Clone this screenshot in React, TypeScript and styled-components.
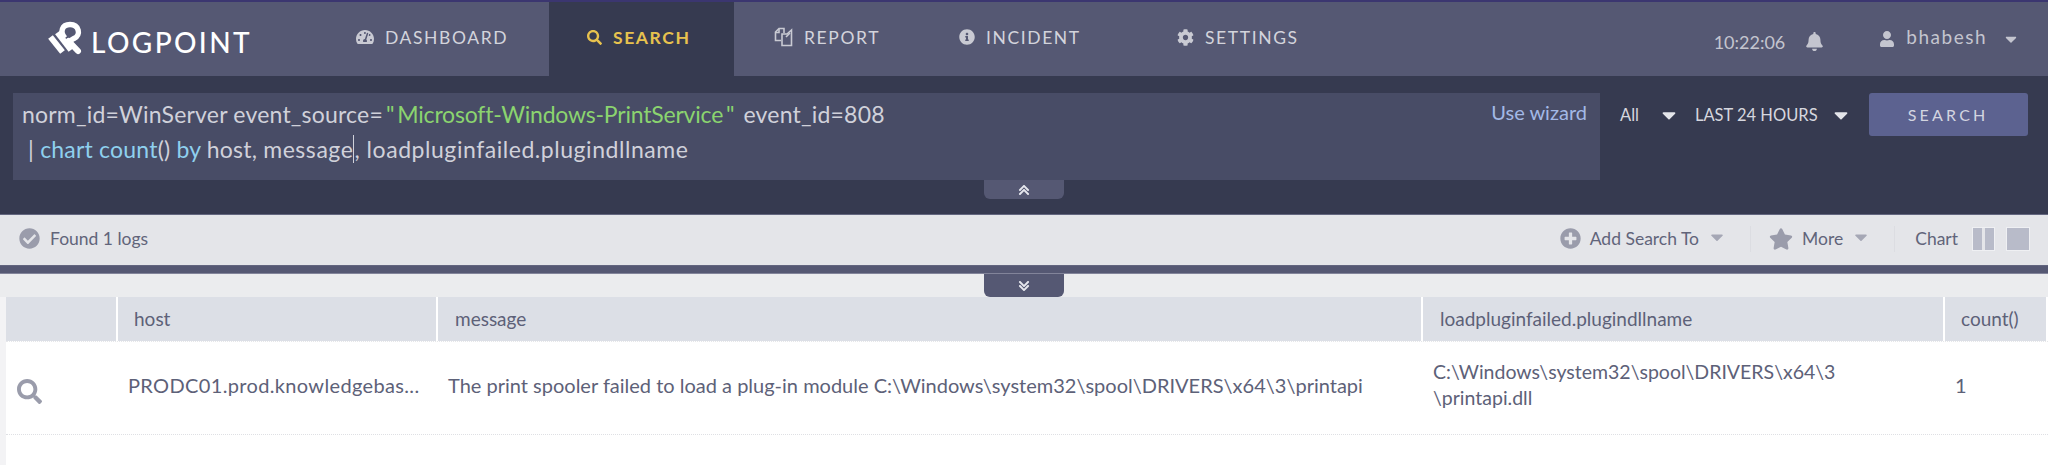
import React from "react";
import styled, { createGlobalStyle } from "styled-components";
import {
  FaBell, FaCaretDown, FaCheckCircle, FaChevronUp, FaChevronDown, FaCog, FaInfoCircle,
  FaPlusCircle, FaSearch, FaStar, FaTachometerAlt, FaUser,
} from "react-icons/fa";

const Global = createGlobalStyle`
  html, body { margin: 0; padding: 0; background: #fff; }
  body { font-family: Lato, "Open Sans", sans-serif; }
  * { box-sizing: border-box; }
`;
const Page = styled.div`width: 2048px; height: 465px; overflow: hidden; background: #fff; display: flex; flex-direction: column;`;
const Dark = styled.div`height: 214px; flex: none; background: #363a50; border-top: 2px solid #3b3670; display: flex; flex-direction: column;`;
const Nav = styled.nav`height: 74px; flex: none; display: flex; background: #555873;`;
const Brand = styled.div`width: 356px; flex: none; padding-left: 44px; display: flex; align-items: center; color: #fff;`;
const BrandName = styled.span`font-size: 28px; letter-spacing: 2.4px; font-weight: 500; margin: 6px 0 0 -3px;`;
const Item = styled.a<{ $active?: boolean; $w: number; $pad: number }>`
  width: ${p => p.$w}px; flex: none; display: flex; align-items: center; gap: 11px; padding: 0 0 4px ${p => p.$pad}px; font-size: 17.5px; letter-spacing: 1.6px;
  color: ${p => p.$active ? "#e8c24e" : "#d3d4dc"};
  background: ${p => p.$active ? "#363a50" : "transparent"};
  font-weight: ${p => p.$active ? 700 : 400};
  svg { flex: none; color: ${p => p.$active ? "#e8c24e" : "#c9cad3"}; }
`;
const NavRight = styled.div`flex: 1; display: flex; align-items: center; justify-content: flex-end; color: #c4c5cf; padding-right: 28px;`;
const Clock = styled.span`font-size: 18px; padding-top: 5px; margin-right: 20px;`;
const User = styled.span`font-size: 19px; letter-spacing: 1.5px; margin: 0 15px 0 11px; padding-bottom: 5px;`;
const SearchRow = styled.div`display: flex; padding: 17px 0 0 13px; height: 106px; align-items: flex-start; position: relative;`;
const Editor = styled.div`width: 1587px; height: 87px; flex: none; background: #484c66; color: #d0d1da; font-size: 23px; letter-spacing: .2px; line-height: 35px; padding: 4px 9px; position: relative; white-space: pre;`;
const EditorLine = styled.div`height: 35px;`;
const Str = styled.span`color: #8bd46f; letter-spacing: -.2px;`;
const Quote = styled.span`margin: 0 3px;`;
const Key = styled.span`color: #8fd0ee;`;
const Fields = styled.span`letter-spacing: .55px;`;
const Pipe = styled.span`border-right: 1px solid #d0d1da;`;
const Wizard = styled.a`position: absolute; top: 2px; right: 13px; color: #a3b9e6; font-size: 20px; letter-spacing: 0;`;
const Scope = styled.div`display: flex; align-items: center; height: 43px; color: #d6d7df; font-size: 16.5px; white-space: nowrap; flex: none;`;
const Caret = styled(FaCaretDown)<{ $c?: string }>`color: ${p => p.$c || "#e4e5ea"}; flex: none;`;
const SearchBtn = styled.button`width: 159px; height: 43px; border: 0; border-radius: 3px; background: #5c6290; color: #d3d5e0; font: 400 16px Lato, sans-serif; letter-spacing: 3.2px; margin-left: 17px; padding: 0;`;
const Grip = styled.div<{ $down?: boolean }>`
  position: absolute; left: 984px; width: 80px; background: #555873; color: #e6e7ee; display: flex; align-items: center; justify-content: center; flex-direction: column;
  ${p => p.$down ? "top: 0; height: 23px;" : "top: 104px; height: 19px;"}
  border-radius: 0 0 6px 6px;
  svg { margin: -4px 0; }
`;
const Tools = styled.div`height: 51px; flex: none; background: #e4e5e9; border-top: 1px solid #63667f; display: flex; align-items: center; padding: 0 19px 3px; color: #61647a; font-size: 17.5px;`;
const Found = styled.span`margin-left: 10px; flex: 1;`;
const ToolText = styled.span<{ $m?: number }>`margin-left: ${p => p.$m ?? 9}px;`;
const Divider = styled.span`width: 1px; height: 26px; background: #dcdde2;`;
const Band = styled.div`height: 9px; flex: none; background: #555873; border-bottom: 1px solid #82849a; border-top: 1px solid #62657f;`;
const Content = styled.div`position: relative; flex: 1; display: flex; flex-direction: column;`;
const TopStrip = styled.div`height: 23px; flex: none; background: #ebecee;`;
const Table = styled.div`flex: 1; background: #fff; border-left: 6px solid #f3f3f5;`;
const Head = styled.div`height: 44px; display: grid; grid-template-columns: 112px 320px 985px 522px 103px; background: #dcdfe6; color: #5d6178; font-size: 19px;`;
const HeadCell = styled.div<{ $pad: number }>`display: flex; align-items: center; padding-left: ${p => p.$pad}px; border-right: 2px solid #fff; padding-bottom: 2px;`;
const Row = styled.div`height: 94px; display: grid; grid-template-columns: 112px 320px 985px 522px 103px; border-top: 1px dotted #e6e7ea; border-bottom: 1px dotted #dfe0e4; color: #5d6178; font-size: 20px; line-height: 26px;`;
const Cell = styled.div<{ $pad: number; $size?: number; $ls?: number }>`display: block; align-self: center; padding: 0 0 6px ${p => p.$pad}px; font-size: ${p => p.$size ?? 20}px; letter-spacing: ${p => p.$ls ?? 0}px; white-space: nowrap;`;
const Mag = styled(FaSearch)`color: #9a9cab; display: block; margin-top: 13px;`;
const Layout = styled.span<{ $w: number; $size: number }>`width: ${p => p.$size}px; height: 22px; display: inline-flex; gap: 3px; outline: 1px solid #eff0f3; margin-left: ${p => p.$w}px;`;
const Pane = styled.i`flex: 1; background: #b8bbc9;`;

function Logo() {
  return (
    <svg width="50" height="40" viewBox="0 0 50 40" fill="none" stroke="#fff" style={{ marginTop: -4, flex: "none" }}>
      <path d="M6.5 20 L18.5 35" strokeWidth="6" />
      <path d="M13.5 15.5 L27 33" strokeWidth="6" />
      <path d="M21 21 C15.5 15 18 7.5 26 7.5 C35 7.5 37.5 18 30 21.5 L26.5 23.5" strokeWidth="5.4" />
      <path d="M24.5 24 L34 34" strokeWidth="6" strokeLinecap="round" />
    </svg>
  );
}

function Report() {
  return (
    <svg width="19" height="20" viewBox="0 0 19 20" fill="none" stroke="#c9cad3" strokeWidth="1.6">
      <path d="M7 13.5 H1.5 V5 L5 1.5 H10 V6" />
      <path d="M8 7 H13 L17.5 3 V18.5 H8 Z" />
      <path d="M5 2 V5.5 H2 M12 10 L16 6" />
    </svg>
  );
}

export default function App() {
  return (
    <Page>
      <Global />
      <Dark>
        <Nav>
          <Brand><Logo /><BrandName>LOGPOINT</BrandName></Brand>
          <Item $w={193} $pad={0}><FaTachometerAlt size={18} />DASHBOARD</Item>
          <Item $active $w={185} $pad={38}><FaSearch size={15} />SEARCH</Item>
          <Item $w={225} $pad={40}><Report />REPORT</Item>
          <Item $w={218} $pad={0}><FaInfoCircle size={16} />INCIDENT</Item>
          <Item $w={300} $pad={0}><FaCog size={17} />SETTINGS</Item>
          <NavRight>
            <Clock>10:22:06</Clock>
            <FaBell size={19} style={{ marginRight: 55, marginTop: 5 }} />
            <FaUser size={16} />
            <User>bhabesh</User>
            <Caret size={18} $c="#c4c5cf" />
          </NavRight>
        </Nav>
        <SearchRow>
          <Editor>
            <EditorLine>
              norm_id=WinServer event_source=<Str><Quote>"</Quote>Microsoft-Windows-PrintService<Quote>"</Quote></Str> event_id=808
            </EditorLine>
            <EditorLine>
              {" | "}<Key>chart count</Key>() <Key>by</Key> host, <Fields><Pipe>message</Pipe>, loadpluginfailed.plugindllname</Fields>
            </EditorLine>
            <Wizard>Use wizard</Wizard>
          </Editor>
          <Scope>
            <span style={{ marginLeft: 20 }}>All</span>
            <Caret size={22} style={{ marginLeft: 19, marginRight: 15 }} />
            <span>LAST 24 HOURS</span>
            <Caret size={22} style={{ marginLeft: 12 }} />
            <SearchBtn>SEARCH</SearchBtn>
          </Scope>
          <Grip><FaChevronUp size={12} /><FaChevronUp size={12} /></Grip>
        </SearchRow>
      </Dark>
      <Tools>
        <FaCheckCircle size={21} color="#9a9cab" />
        <Found>Found 1 logs</Found>
        <FaPlusCircle size={21} color="#9a9cab" />
        <ToolText>Add Search To</ToolText>
        <Caret size={20} $c="#a5a7b5" style={{ margin: "0 23px 4px 8px" }} />
        <Divider />
        <FaStar size={24} color="#9a9cab" style={{ marginLeft: 18 }} />
        <ToolText>More</ToolText>
        <Caret size={20} $c="#a5a7b5" style={{ margin: "0 23px 4px 8px" }} />
        <Divider />
        <ToolText $m={20}>Chart</ToolText>
        <Layout $w={15} $size={21}><Pane /><Pane /></Layout>
        <Layout $w={13} $size={22}><Pane /></Layout>
      </Tools>
      <Band />
      <Content>
        <Grip $down><FaChevronDown size={12} /><FaChevronDown size={12} /></Grip>
        <TopStrip />
        <Table>
          <Head>
            <HeadCell $pad={0} />
            <HeadCell $pad={16}>host</HeadCell>
            <HeadCell $pad={17}>message</HeadCell>
            <HeadCell $pad={17}>loadpluginfailed.plugindllname</HeadCell>
            <HeadCell $pad={16}>count()</HeadCell>
          </Head>
          <Row>
            <Cell $pad={11}><Mag size={25} /></Cell>
            <Cell $pad={10} $ls={.35}>PRODC01.prod.knowledgebas...</Cell>
            <Cell $pad={10}>The print spooler failed to load a plug-in module C:\Windows\system32\spool\DRIVERS\x64\3\printapi</Cell>
            <Cell $pad={10} $size={19.5}>C:\Windows\system32\spool\DRIVERS\x64\3<br />\printapi.dll</Cell>
            <Cell $pad={10}>1</Cell>
          </Row>
        </Table>
      </Content>
    </Page>
  );
}
